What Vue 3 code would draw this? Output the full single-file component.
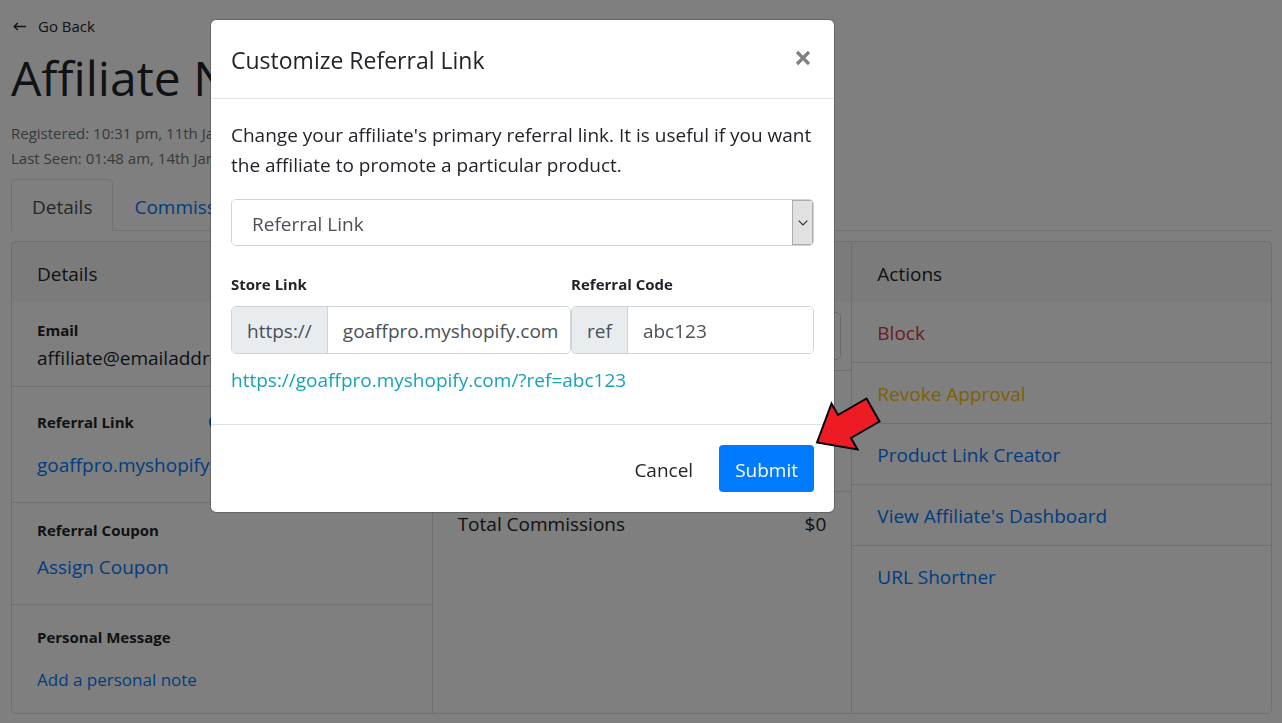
<script setup>
import { ref, computed } from 'vue'

const linkType = ref('Referral Link')
const store = ref('goaffpro.myshopify.com')
const code = ref('abc123')
const fullLink = computed(() => `https://${store.value}/?ref=${code.value}`)

const actions = [
  { label: 'Block', tone: 'danger' },
  { label: 'Revoke Approval', tone: 'warning' },
  { label: 'Product Link Creator', tone: 'primary' },
  { label: "View Affiliate's Dashboard", tone: 'primary' },
  { label: 'URL Shortner', tone: 'primary' },
]
</script>

<template>
  <div class="page">
    <a class="back" href="#">
      <svg width="14" height="10" viewBox="0 0 14 10" aria-hidden="true">
        <path d="M13 5.500H1.500M4.800 2L1.200 5.500L4.800 9" fill="none" stroke="currentColor" stroke-width="1.400" />
      </svg>
      Go Back
    </a>
    <h1>Affiliate Name</h1>
    <div class="meta">
      <div>Registered: 10:31 pm, 11th Jan</div>
      <div>Last Seen: 01:48 am, 14th Jan</div>
    </div>

    <nav class="tabs">
      <a class="tab active" href="#">Details</a>
      <a class="tab" href="#">Commissions</a>
    </nav>

    <div class="cards">
      <section class="card">
        <h2>Details</h2>
        <div class="row email">
          <strong>Email</strong>
          <span>affiliate@emailaddress.com</span>
        </div>
        <div class="row link">
          <div class="row-head">
            <strong>Referral Link</strong>
            <button class="edit" type="button" aria-label="Customize referral link">
              <svg width="16" height="16" viewBox="0 0 16 16" aria-hidden="true">
                <circle cx="8" cy="8" r="7" fill="none" stroke="currentColor" stroke-width="2" />
              </svg>
            </button>
          </div>
          <a href="#">goaffpro.myshopify.com</a>
        </div>
        <div class="row coupon">
          <strong>Referral Coupon</strong>
          <a href="#">Assign Coupon</a>
        </div>
        <div class="row note">
          <strong>Personal Message</strong>
          <a class="small" href="#">Add a personal note</a>
        </div>
      </section>

      <section class="card">
        <h2>Commissions</h2>
        <div class="row field-row">
          <input class="field" type="text" aria-label="Commission" />
        </div>
        <div class="row sales"></div>
        <div class="row total">
          <span>Total Commissions</span>
          <span>$0</span>
        </div>
      </section>

      <section class="card">
        <h2>Actions</h2>
        <a v-for="a in actions" :key="a.label" class="action" :class="a.tone" href="#">{{ a.label }}</a>
      </section>
    </div>
  </div>

  <div class="backdrop">
    <form class="modal" role="dialog" aria-labelledby="modal-title" @submit.prevent>
      <header class="modal-header">
        <h3 id="modal-title">Customize Referral Link</h3>
        <button class="close" type="button" aria-label="Close">
          <svg width="16" height="16" viewBox="0 0 16 16" aria-hidden="true">
            <path d="M2 2L14 14M14 2L2 14" stroke="currentColor" stroke-width="3.200" />
          </svg>
        </button>
      </header>

      <div class="modal-body">
        <p>Change your affiliate's primary referral link. It is useful if you want the affiliate to promote a particular product.</p>
        <div class="select">
          <select v-model="linkType" aria-label="Link type">
            <option>Referral Link</option>
          </select>
          <span class="select-arrow">
            <svg width="10" height="6" viewBox="0 0 10 6" aria-hidden="true">
              <path d="M0.700 0.700L5 5L9.300 0.700" fill="none" stroke="#333" stroke-width="1.200" />
            </svg>
          </span>
        </div>
        <div class="inputs">
          <div>
            <label for="store">Store Link</label>
            <div class="group">
              <span class="addon">https://</span>
              <input id="store" v-model="store" type="text" />
            </div>
          </div>
          <div>
            <label for="code">Referral Code</label>
            <div class="group">
              <span class="addon">ref</span>
              <input id="code" v-model="code" type="text" />
            </div>
          </div>
        </div>
        <a class="preview" href="#">{{ fullLink }}</a>
      </div>

      <footer class="modal-footer">
        <button class="btn" type="button">Cancel</button>
        <button class="btn submit" type="submit">Submit</button>
        <svg class="pointer" width="66" height="54" viewBox="0 0 66 54" aria-hidden="true">
          <path d="M2 45.500L16.500 6.500L23 18L51.500 1.500L64.500 24.500L36 41L42.500 52.500Z" fill="#ed1c24" stroke="#000" stroke-width="2" />
        </svg>
      </footer>
    </form>
  </div>
</template>

<style>
body {
  background: #fff;
  overflow: hidden;
}
</style>

<style scoped>
.page,
.backdrop {
  box-sizing: border-box;
  font-family: "Open Sans", "Noto Sans", sans-serif;
  font-size: 19px;
  line-height: 30px;
  color: #212529;
}
.page *,
.backdrop * {
  box-sizing: border-box;
}
a {
  color: #007bff;
  text-decoration: none;
}
h1,
h2,
h3,
p {
  margin: 0;
  font-weight: 400;
}
button,
input,
select {
  font: inherit;
}
.page {
  padding: 13px 10px 9px 11px;
}
.back {
  display: flex;
  align-items: center;
  gap: 11px;
  padding-left: 2px;
  font-size: 15px;
  line-height: 26px;
  color: #212529;
}
h1 {
  margin-top: 9px;
  font-size: 48px;
  line-height: 60px;
  white-space: nowrap;
}
.meta {
  margin-top: 13px;
  font-size: 15px;
  line-height: 25px;
  color: #6c757d;
}
.tabs {
  display: flex;
  margin-top: 8px;
  border-bottom: 1px solid #dee2e6;
}
.tab {
  margin-bottom: -1px;
  padding: 12px 20px 9px;
  border: 1px solid transparent;
  border-bottom: 0;
  border-radius: 5px 5px 0 0;
}
.tab.active {
  color: #495057;
  background: #fff;
  border-color: #dee2e6;
}
.cards {
  display: grid;
  grid-template-columns: repeat(3, 1fr);
  margin-top: 10px;
  border: 1px solid #dfdfdf;
  border-radius: 5px;
}
.card + .card {
  border-left: 1px solid #dfdfdf;
}
h2 {
  padding: 17px 25px 13px;
  font-size: 19px;
  line-height: 30px;
  background: rgba(0, 0, 0, 0.03);
}
.row {
  display: flex;
  flex-direction: column;
  padding: 0 25px;
  border-bottom: 1px solid #dfdfdf;
}
.row:last-child {
  border-bottom: 0;
}
.row strong,
label {
  font-size: 15px;
  line-height: 26px;
  font-weight: 700;
}
.row-head {
  display: flex;
  align-items: center;
  gap: 75px;
  line-height: 26px;
}
.edit {
  display: flex;
  padding: 0;
  border: 0;
  background: none;
  color: #007bff;
}
.email {
  padding-top: 15px;
  padding-bottom: 13px;
}
.link {
  gap: 15px;
  padding-top: 22px;
  padding-bottom: 22px;
}
.coupon {
  gap: 9px;
  padding-top: 14px;
  padding-bottom: 22px;
}
.note {
  gap: 15px;
  padding-top: 19px;
  padding-bottom: 18px;
}
.small {
  font-size: 17px;
}
.field-row {
  padding: 10px;
}
.field {
  width: 100%;
  height: 48px;
  border: 1px solid #ced4da;
  border-radius: 5px;
}
.sales {
  height: 121px;
}
.total {
  flex-direction: row;
  justify-content: space-between;
  padding-top: 17px;
}
.action {
  display: block;
  padding: 16px 25px 14px;
  border-bottom: 1px solid #dfdfdf;
}
.action:last-child {
  border-bottom: 0;
}
.danger {
  color: #dc3545;
}
.warning {
  color: #ffc107;
}
.backdrop {
  position: fixed;
  inset: 0;
  padding: 19px 20px 0 210px;
  background: rgba(0, 0, 0, 0.5);
}
.modal {
  max-width: 625px;
  background: #fff;
  background-clip: padding-box;
  border: 1px solid rgba(0, 0, 0, 0.2);
  border-radius: 6px;
}
.modal-header {
  display: flex;
  justify-content: space-between;
  align-items: flex-start;
  padding: 21px 20px 19px;
  border-bottom: 1px solid #dee2e6;
}
h3 {
  font-size: 23px;
  line-height: 38px;
}
.close {
  display: flex;
  margin-top: 6px;
  padding: 3px;
  border: 0;
  background: none;
  color: #808080;
}
.modal-body {
  padding: 21px 20px 29px;
}
.select {
  display: flex;
  margin-top: 19px;
  height: 47px;
  border: 1px solid #ced4da;
  border-radius: 5px;
  overflow: hidden;
}
select {
  flex: 1;
  padding: 2px 20px 0;
  border: 0;
  appearance: none;
  background: #fff;
  color: #495057;
}
.select-arrow {
  display: flex;
  align-items: center;
  justify-content: center;
  width: 21px;
  border: 1px solid #adadad;
  background: #e1e1e1;
}
.inputs {
  display: grid;
  grid-template-columns: minmax(0, 7fr) minmax(0, 5fr);
  margin-top: 25px;
}
label {
  display: block;
}
.group {
  display: flex;
  height: 48px;
  margin-top: 9px;
  border: 1px solid #ced4da;
  border-radius: 5px;
  overflow: hidden;
  color: #495057;
}
.addon {
  display: flex;
  align-items: center;
  padding: 2px 15px 0;
  border-right: 1px solid #ced4da;
  background: #e9ecef;
}
.group input {
  flex: 1;
  width: 0;
  min-width: 0;
  padding: 2px 0 0 15px;
  border: 0;
  background: #fff;
  color: #495057;
}
.preview {
  display: block;
  margin-top: 11px;
  color: #17a2b8;
}
.modal-footer {
  position: relative;
  display: flex;
  justify-content: flex-end;
  gap: 10px;
  padding: 20px;
  border-top: 1px solid #dee2e6;
}
.btn {
  height: 47px;
  padding: 2px 16px 0;
  border: 0;
  border-radius: 4px;
  background: transparent;
  color: #212529;
}
.submit {
  background: #007bff;
  color: #fff;
}
.pointer {
  position: absolute;
  right: -47px;
  top: -28px;
}
</style>
